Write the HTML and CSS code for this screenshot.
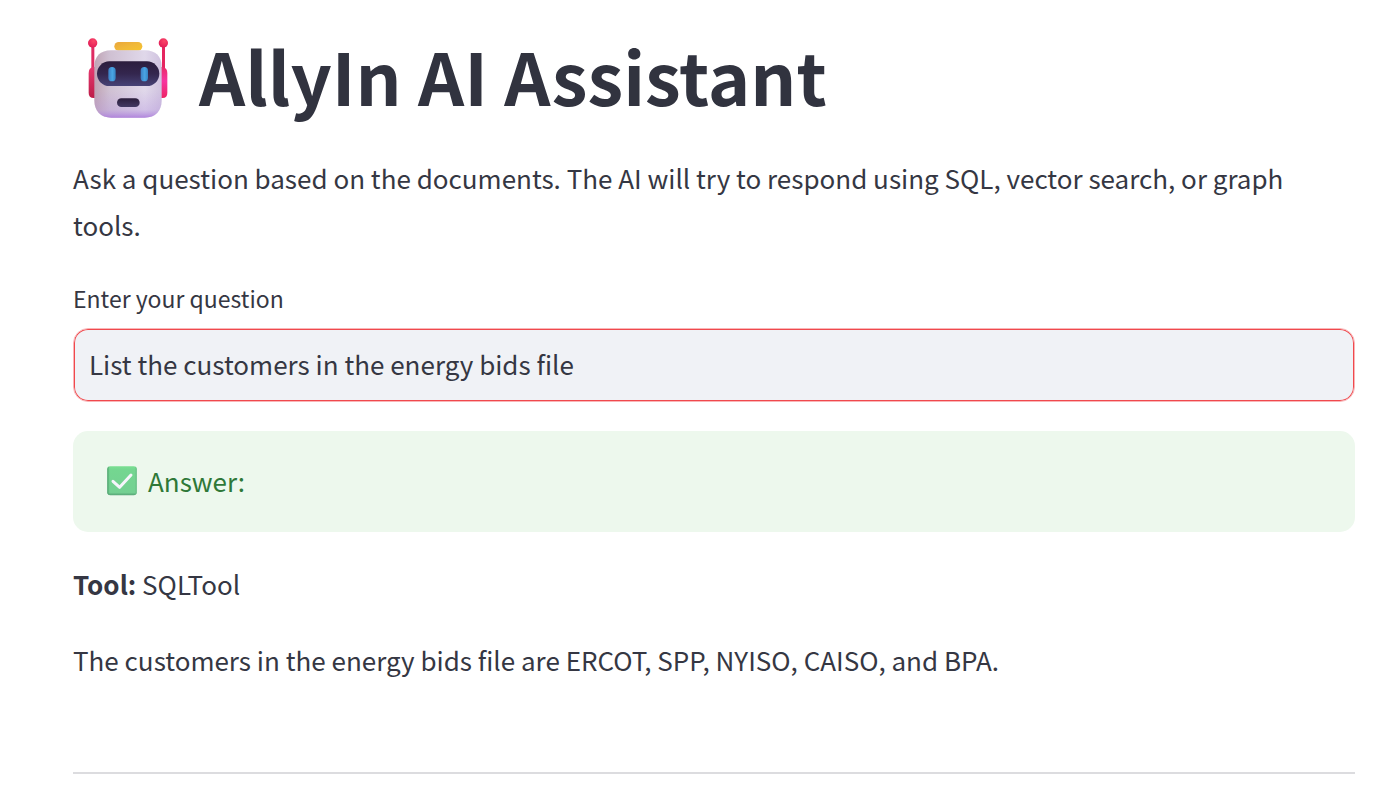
FILE: index.html
```html
<!DOCTYPE html>
<html lang="en">
<head>
<meta charset="utf-8">
<meta name="viewport" content="width=device-width, initial-scale=1">
<title>AllyIn AI Assistant</title>
<link rel="stylesheet" href="styles.css">
</head>
<body>
<main class="page">
  <h1 class="title">
    <svg class="robot" viewBox="50 17 246 267" aria-hidden="true">
      <defs>
        <linearGradient id="head" x1="0" y1="0" x2="1" y2="0">
          <stop offset="0" stop-color="#bfa3b4"/><stop offset=".22" stop-color="#cfc0d2"/><stop offset=".75" stop-color="#e0d8ea"/><stop offset="1" stop-color="#cfc2df"/>
        </linearGradient>
        <linearGradient id="shade" x1="0" y1="0" x2="0" y2="1">
          <stop offset=".6" stop-color="#b997e0" stop-opacity="0"/><stop offset=".88" stop-color="#b898e0" stop-opacity=".35"/><stop offset="1" stop-color="#ae80dc" stop-opacity=".95"/>
        </linearGradient>
        <linearGradient id="visor" x1="0" y1="0" x2="0" y2="1">
          <stop offset="0" stop-color="#2c1d3d"/><stop offset=".5" stop-color="#33264e"/><stop offset="1" stop-color="#474276"/>
        </linearGradient>
        <linearGradient id="mouth" x1="0" y1="0" x2="0" y2="1">
          <stop offset="0" stop-color="#2c1e3c"/><stop offset="1" stop-color="#433963"/>
        </linearGradient>
        <linearGradient id="eye" x1="0" y1="0" x2="1" y2="0">
          <stop offset="0" stop-color="#3c7fc4"/><stop offset=".55" stop-color="#4aa5e4"/><stop offset="1" stop-color="#3583c4"/>
        </linearGradient>
        <linearGradient id="cap" x1="0" y1="0" x2="1" y2="1">
          <stop offset="0" stop-color="#eaa63b"/><stop offset=".5" stop-color="#f0b83a"/><stop offset="1" stop-color="#f6c42f"/>
        </linearGradient>
        <linearGradient id="earLeft" x1="0" y1="0" x2="0" y2="1">
          <stop offset="0" stop-color="#e63970"/><stop offset="1" stop-color="#bd1c48"/>
        </linearGradient>
        <linearGradient id="earRight" x1="0" y1="0" x2="0" y2="1">
          <stop offset="0" stop-color="#e92c68"/><stop offset=".45" stop-color="#f735a0"/><stop offset="1" stop-color="#ed2464"/>
        </linearGradient>
        <radialGradient id="knob" cx=".6" cy=".3" r=".7">
          <stop offset="0" stop-color="#fb4668"/><stop offset="1" stop-color="#e21d57"/>
        </radialGradient>
      </defs>
      <path d="M63 60h9v70h-9z" fill="#df2d63"/>
      <path d="M275 60h9v70h-9z" fill="#e5265f"/>
      <circle cx="67" cy="53" r="14" fill="url(#knob)"/>
      <circle cx="279" cy="53" r="14" fill="url(#knob)"/>
      <path d="M78 125h-8q-15 2-15 18v60q0 15 15 15h8z" fill="url(#earLeft)"/>
      <path d="M270 125h7q14 3 14 18v60q0 15-14 15h-7z" fill="url(#earRight)"/>
      <rect x="132" y="50" width="84" height="26" rx="13" fill="url(#cap)"/>
      <path d="M122 75h102c32 0 50 19 50 48v102c0 33-19 52-51 52H123c-32 0-51-19-51-52V123c0-29 18-48 50-48z" fill="url(#head)"/>
      <path d="M122 75h102c32 0 50 19 50 48v102c0 33-19 52-51 52H123c-32 0-51-19-51-52V123c0-29 18-48 50-48z" fill="url(#shade)"/>
      <rect x="80" y="108" width="187" height="74" rx="37" fill="url(#visor)"/>
      <rect x="114" y="125" width="22" height="43" rx="11" fill="url(#eye)"/>
      <rect x="211" y="125" width="22" height="43" rx="11" fill="url(#eye)"/>
      <rect x="140" y="219" width="68" height="26" rx="13" fill="url(#mouth)"/>
    </svg>
    <span>AllyIn AI Assistant</span>
  </h1>

  <p class="text intro">Ask a question based on the documents. The AI will try to respond using SQL, vector search, or graph tools.</p>

  <form class="field">
    <label class="field-label" for="question">Enter your question</label>
    <input class="field-input" id="question" type="text" value="List the customers in the energy bids file">
  </form>

  <div class="alert" role="status">
    <svg class="check" viewBox="0 0 90 90" aria-hidden="true">
      <defs>
        <linearGradient id="tile" x1="0" y1="0" x2="0" y2="1">
          <stop offset="0" stop-color="#79df91"/><stop offset=".12" stop-color="#74d690"/><stop offset=".9" stop-color="#74d092"/><stop offset="1" stop-color="#55a274"/>
        </linearGradient>
        <linearGradient id="edge" x1="0" y1="0" x2="1" y2="0">
          <stop offset="0" stop-color="#4d9c6c"/><stop offset=".08" stop-color="#4d9c6c" stop-opacity="0"/><stop offset=".94" stop-color="#65b983" stop-opacity="0"/><stop offset="1" stop-color="#65b983"/>
        </linearGradient>
      </defs>
      <rect x="1" y="1" width="88" height="87" rx="9" fill="url(#tile)"/>
      <rect x="1" y="1" width="88" height="87" rx="9" fill="url(#edge)"/>
      <path d="M18 46l20 18 34-37" fill="none" stroke="#f7f5fc" stroke-width="9" stroke-linecap="round" stroke-linejoin="round"/>
    </svg>
    <span>Answer:</span>
  </div>

  <p class="text tool"><strong>Tool:</strong> SQLTool</p>
  <p class="text answer">The customers in the energy bids file are ERCOT, SPP, NYISO, CAISO, and BPA.</p>
  <hr class="divider">
</main>
</body>
</html>
```
FILE: styles.css
```css
* {
  box-sizing: border-box;
}

body {
  margin: 0;
  background: #fff;
  color: #353743;
  font-family: "Noto Sans CJK SC", "Noto Sans", sans-serif;
  font-size: 26px;
  line-height: 47px;
}

.page {
  padding: 27px 29px 32px 73px;
}

.title {
  display: flex;
  align-items: center;
  gap: 30px;
  margin: 0 0 31px;
  padding-left: 14px;
  color: #31333f;
  font-size: 72px;
  font-weight: 700;
  line-height: 96px;
}

.robot {
  flex: none;
  width: 82px;
  height: 89px;
}

.text {
  margin: 0;
}

.intro {
  margin-bottom: 31px;
}

.field {
  display: flex;
  flex-direction: column;
  gap: 11px;
  margin-bottom: 29px;
}

.field-label {
  font-size: 23px;
  line-height: 38px;
}

.field-input {
  width: 100%;
  height: 74px;
  padding: 0 15px 3px;
  border: 1px solid #fab5b7;
  border-radius: 15px;
  outline: none;
  background: #f0f2f6;
  box-shadow: inset 0 0 0 1px #f0494d;
  color: inherit;
  font: inherit;
}

.alert {
  display: flex;
  align-items: center;
  gap: 11px;
  margin-bottom: 28px;
  padding: 26px 34px 28px;
  border-radius: 15px;
  background: #edf8ed;
  color: #2f7838;
}

.check {
  flex: none;
  width: 30px;
  height: 30px;
}

.tool {
  margin-bottom: 29px;
}

.answer {
  margin-bottom: 89px;
}

.divider {
  height: 2px;
  margin: 0;
  border: 0;
  background: #dcdcdf;
}
```
